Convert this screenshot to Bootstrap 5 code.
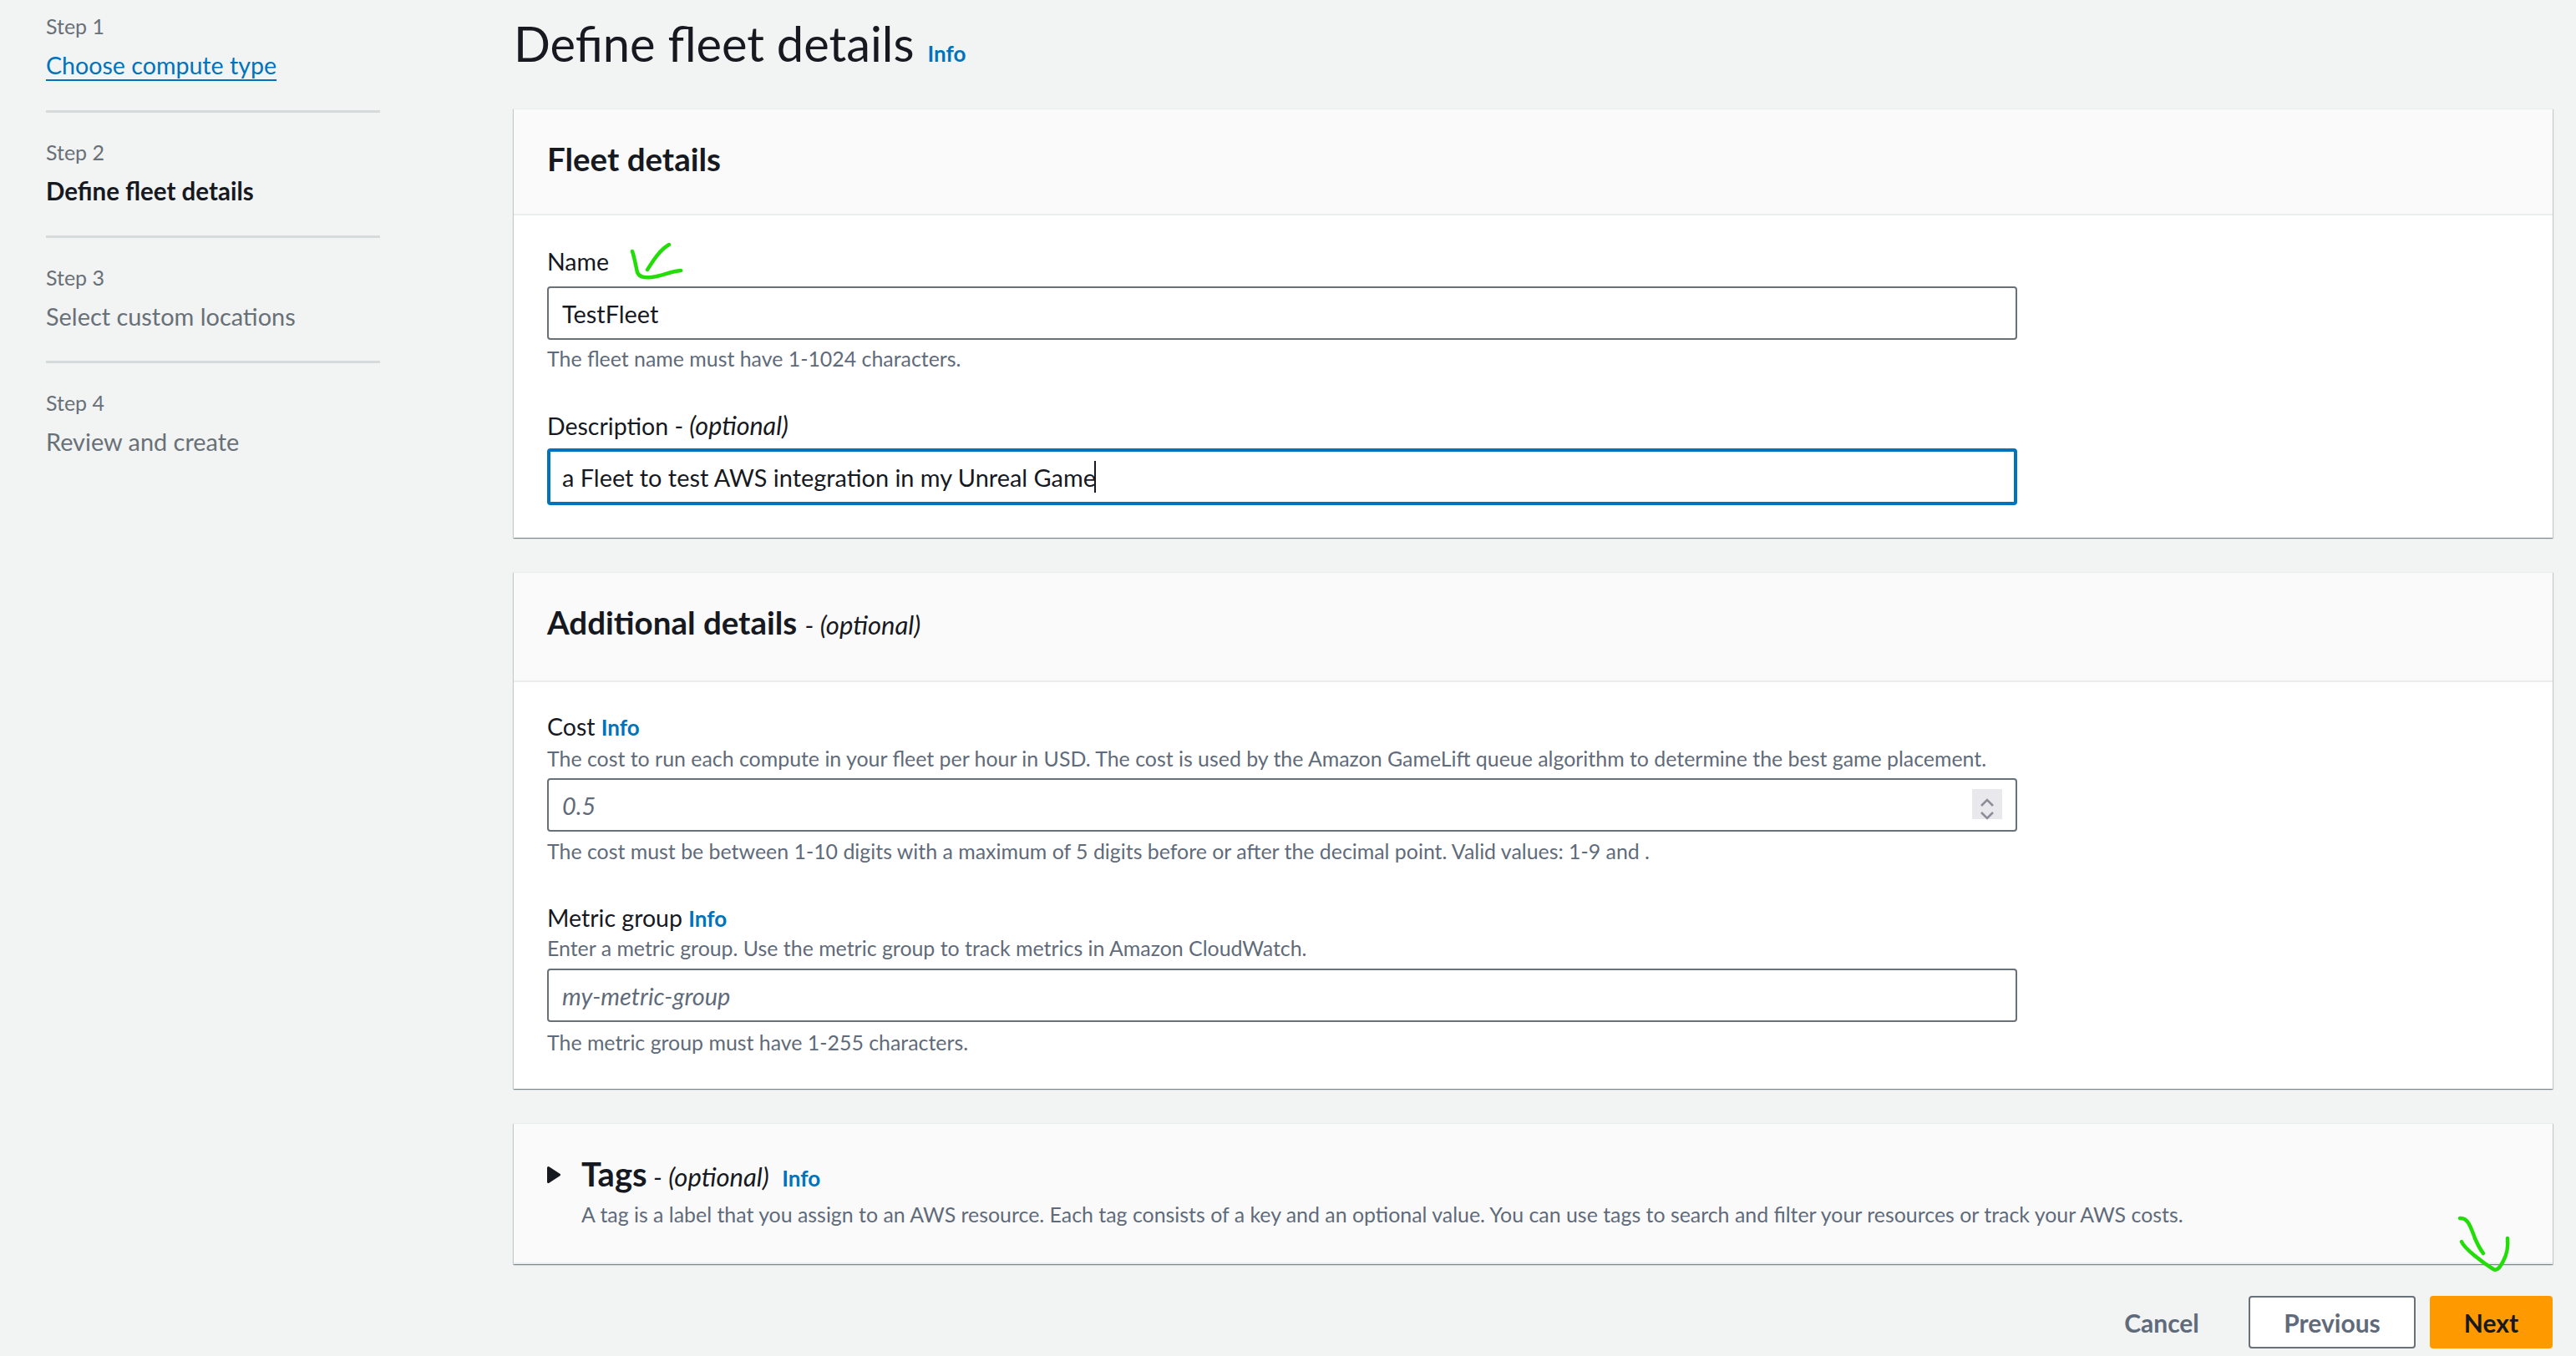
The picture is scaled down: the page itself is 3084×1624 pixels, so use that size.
<!DOCTYPE html>
<html lang="en">
<head>
<meta charset="utf-8">
<title>Define fleet details</title>
<link rel="stylesheet" href="https://cdn.jsdelivr.net/npm/bootstrap@5.3.0/dist/css/bootstrap.min.css">
<style>
:root{--ink:#16191f;--sub:#5f6b7a;--link:#0073bb;--edge:#687078}
html,body{height:1624px;overflow:hidden}
body{background:#f2f3f3;color:var(--ink);font-family:"Lato","Liberation Sans",sans-serif;font-size:29px;line-height:40px;position:relative}
.shell{display:flex;height:1624px}
.wizard{width:615px;flex:none;padding:11px 0 0 55px}
.wizard ol{list-style:none;margin:0;padding:0;width:400px}
.wizard li{height:150px;border-bottom:3px solid #d5dbdb;padding-top:27px}
.wizard li:first-child{height:124px;padding-top:0}
.wizard li:last-child{border-bottom:0}
.stepno{display:block;font-size:25px;line-height:40px;color:var(--edge);margin-bottom:7px}
.wizard li a{color:var(--link);font-size:28.6px;text-underline-offset:6px;text-decoration-thickness:2px}
.stepnow{font-weight:700;font-size:29.5px}
.stepoff{color:var(--edge);font-size:28.9px}
.mainarea{flex:1;min-width:0;padding:0 28px 0 0}
.pagetitle{font-size:57.8px;line-height:70px;font-weight:400;margin:17px 0 43px;display:flex;align-items:baseline;gap:16px}
.infolink{color:var(--link);font-size:26px;font-weight:700;text-decoration:none;line-height:1}
.panel{border:0;border-radius:0;background:#fff;box-shadow:0 1px 1px 0 rgba(0,28,36,.3),1px 1px 1px 0 rgba(0,28,36,.15),-1px 1px 1px 0 rgba(0,28,36,.15);border-top:1px solid #eaeded;margin-bottom:41px}
.panel .card-header{background:#fafafa;border-radius:0;border-bottom:2px solid #eaeded;padding:0 40px 8px;display:flex;align-items:center;height:127px}
.panel .card-header.headtall{height:131px;padding-bottom:8px}
.paneltitle{font-size:38.5px;font-weight:700;margin:0;line-height:50px}
.opt{font-style:italic;font-weight:400;font-size:31px}
.panel .card-body{padding:35px 40px 0}
.panel .card-body.bodytight{padding-top:33px}
.fieldlabel{display:block;font-size:28.5px;line-height:40px;margin:0}
.fieldlabel i{font-size:30.5px}
.fieldlabel .infolink{margin-left:0}
.hint{font-size:24.9px;line-height:32px;color:var(--sub);margin:0}
.fieldinput{width:1760px;height:64px;border:2px solid var(--edge);border-radius:4px;font-size:28.9px;line-height:40px;padding:0 16px;color:var(--ink);box-shadow:none}
.fieldinput::placeholder{color:var(--sub);font-style:italic}
.fieldinput.isfocus{border:4px solid var(--link);padding:0 14px;height:68px}
.inputwrap{position:relative;width:1760px}
.caret{position:absolute;left:655px;top:15px;width:2px;height:38px;background:var(--ink)}
.spin{position:absolute;right:18px;top:13px;width:36px;height:36px;background:#e8e8ed}
.gapname{margin-bottom:10px}
.gapdesc{margin-top:44px;margin-bottom:7px}
.gaphint{margin-top:6px}
.gapcost{margin-top:7px}
.gaplast{margin-top:8px}
.gapnext{margin-top:44px}
.gapfield{margin-top:2px;margin-bottom:8px}
.gapmetric{margin-bottom:9px}
.endfocus{height:39px}
.endplain{height:40px}
.tagshead{background:#fafafa;margin:0;height:168px;padding:35px 40px 0;display:flex;gap:25px;border-bottom:2px solid #eaeded}
.caretbtn{margin-top:16px;flex:none}
.tagtitle{font-size:40px;font-weight:700;line-height:50px}
.tagsub{margin-top:7px}
.actions{display:flex;justify-content:flex-end;align-items:center;margin-top:-3px}
.actions .btn{font-size:30px;font-weight:700;border-radius:4px;height:63px;line-height:1;display:flex;align-items:center;justify-content:center}
.btncancel{color:var(--sub);border:0;background:transparent;width:148px;margin-right:30px}
.btnprev{width:200px;background:#fff;border:2px solid var(--edge);color:var(--sub);margin-right:17px}
.btnnext{width:147px;background:#f90;border:2px solid #f90;color:var(--ink)}
.scribble{position:absolute;left:0;top:0;pointer-events:none}
</style>
</head>
<body>
<div class="shell">
  <nav class="wizard">
    <ol>
      <li><span class="stepno">Step 1</span><a href="#">Choose compute type</a></li>
      <li><span class="stepno">Step 2</span><span class="stepnow">Define fleet details</span></li>
      <li><span class="stepno">Step 3</span><span class="stepoff">Select custom locations</span></li>
      <li><span class="stepno">Step 4</span><span class="stepoff">Review and create</span></li>
    </ol>
  </nav>
  <main class="mainarea">
    <h1 class="pagetitle">Define fleet details <a class="infolink" href="#">Info</a></h1>

    <section class="card panel">
      <div class="card-header"><h2 class="paneltitle">Fleet details</h2></div>
      <div class="card-body">
        <label class="fieldlabel gapname" for="nm">Name</label>
        <input id="nm" class="form-control fieldinput" value="TestFleet">
        <p class="hint gaphint">The fleet name must have 1-1024 characters.</p>
        <label class="fieldlabel gapdesc" for="ds">Description - <i>(optional)</i></label>
        <div class="inputwrap">
          <input id="ds" class="form-control fieldinput isfocus" value="a Fleet to test AWS integration in my Unreal Game">
          <span class="caret"></span>
        </div>
        <div class="endfocus"></div>
      </div>
    </section>

    <section class="card panel">
      <div class="card-header headtall"><h2 class="paneltitle">Additional details <span class="opt">- (optional)</span></h2></div>
      <div class="card-body bodytight">
        <label class="fieldlabel" for="cs">Cost <a class="infolink" href="#">Info</a></label>
        <p class="hint gapfield">The cost to run each compute in your fleet per hour in USD. The cost is used by the Amazon GameLift queue algorithm to determine the best game placement.</p>
        <div class="inputwrap">
          <input id="cs" class="form-control fieldinput" placeholder="0.5">
          <span class="spin"><svg width="36" height="36" viewBox="0 0 36 36" fill="none" stroke="#8d8d99" stroke-width="2.6"><path d="M11 14l7-7 7 7M11 22l7 7 7-7"/></svg></span>
        </div>
        <p class="hint gapcost">The cost must be between 1-10 digits with a maximum of 5 digits before or after the decimal point. Valid values: 1-9 and .</p>
        <label class="fieldlabel gapnext" for="mg">Metric group <a class="infolink" href="#">Info</a></label>
        <p class="hint gapmetric">Enter a metric group. Use the metric group to track metrics in Amazon CloudWatch.</p>
        <input id="mg" class="form-control fieldinput" placeholder="my-metric-group">
        <p class="hint gaplast">The metric group must have 1-255 characters.</p>
        <div class="endplain"></div>
      </div>
    </section>

    <section class="card panel">
      <div class="tagshead">
        <svg class="caretbtn" width="16" height="20" viewBox="0 0 16 20"><path d="M1.5 1.5 14.5 10 1.5 18.5Z" fill="#16191f" stroke="#16191f" stroke-width="3" stroke-linejoin="round"/></svg>
        <div>
          <div><span class="tagtitle">Tags</span> <span class="opt">- (optional)</span> <a class="infolink ms-2" href="#">Info</a></div>
          <p class="hint tagsub">A tag is a label that you assign to an AWS resource. Each tag consists of a key and an optional value. You can use tags to search and filter your resources or track your AWS costs.</p>
        </div>
      </div>
    </section>

    <div class="actions">
      <button class="btn btncancel">Cancel</button>
      <button class="btn btnprev">Previous</button>
      <button class="btn btnnext">Next</button>
    </div>
  </main>
</div>
<svg class="scribble" width="3084" height="1624" fill="none" stroke="#22dd08" stroke-width="4.5" stroke-linecap="round" stroke-linejoin="round">
  <path d="M757 301C760 310 761 318 763 326C765 332 772 333 780 332C792 331 802 325 815 324"/>
  <path d="M775 323C782 312 790 299 801 293"/>
  <path d="M2945 1459C2955 1458 2958 1470 2963 1483C2966 1490 2969 1496 2973 1501"/>
  <path d="M2947 1487C2950 1495 2972 1512 2985 1520C2990 1523 2994 1516 2997 1510C3001 1503 3003 1492 3002 1483"/>
</svg>
<script src="https://cdn.jsdelivr.net/npm/bootstrap@5.3.0/dist/js/bootstrap.bundle.min.js"></script>
</body>
</html>
